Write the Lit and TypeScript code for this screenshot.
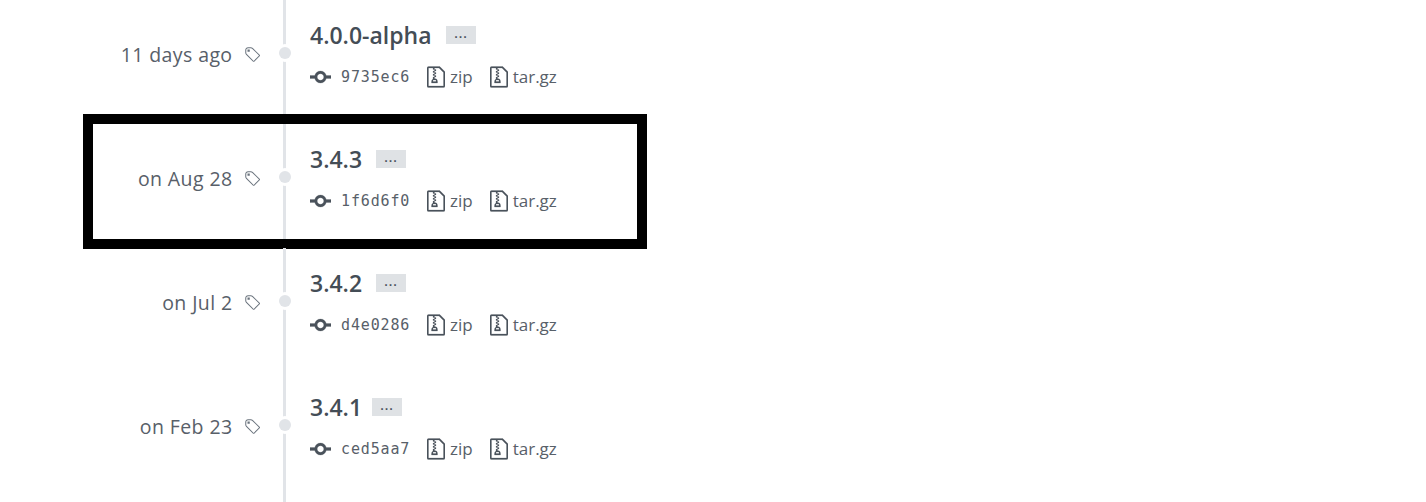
import { LitElement, html, css, svg } from "lit";
import { customElement } from "lit/decorators.js";

const rows = [
  { when: "11 days ago", tag: "4.0.0-alpha", sha: "9735ec6", w: 121 },
  { when: "on Aug 28", tag: "3.4.3", sha: "1f6d6f0", w: 51, boxed: true },
  { when: "on Jul 2", tag: "3.4.2", sha: "d4e0286", w: 51 },
  { when: "on Feb 23", tag: "3.4.1", sha: "ced5aa7", w: 47 },
];

const tagIcon = svg`<path fill-rule="evenodd" d="M7.73 1.73C7.26 1.26 6.62 1 5.96 1H3.5C2.13 1 1 2.13 1 3.5v2.47c0 .66.27 1.3.73 1.77l6.06 6.06c.39.39 1.02.39 1.41 0l4.59-4.59a.996.996 0 0 0 0-1.41L7.73 1.73zM2.38 7.09c-.31-.3-.47-.7-.47-1.13V3.5c0-.88.72-1.59 1.59-1.59h2.47c.42 0 .83.16 1.13.47l6.14 6.13-4.73 4.73-6.13-6.15zM3.01 3h2v2H3V3h.01z"/>`;
const commitIcon = svg`<path fill-rule="evenodd" d="M10.86 7c-.45-1.72-2-3-3.86-3-1.86 0-3.41 1.28-3.86 3H0v2h3.14c.45 1.72 2 3 3.86 3 1.86 0 3.41-1.28 3.86-3H14V7h-3.14zM7 10.2c-1.22 0-2.2-.98-2.2-2.2 0-1.22.98-2.2 2.2-2.2 1.22 0 2.2.98 2.2 2.2 0 1.22-.98 2.2-2.2 2.2z"/>`;
const zipIcon = svg`<path fill-rule="evenodd" d="M8.5 1H1a1 1 0 0 0-1 1v12a1 1 0 0 0 1 1h10a1 1 0 0 0 1-1V4.5L8.5 1zM11 14H1V2h3v1h1V2h3l3 3v9zM5 4V3h1v1H5zM4 4h1v1H4V4zm1 2V5h1v1H5zM4 6h1v1H4V6zm1 2V7h1v1H5zM4 9.28A2 2 0 0 0 3 11v1h4v-1a2 2 0 0 0-2-2V8H4v1.28zM6 10v1H4v-1h2z"/>`;

@customElement("app-root")
export class AppRoot extends LitElement {
  static styles = css`
    :host {
      display: block;
      height: 502px;
      overflow: hidden;
      background: #fff;
      font-family: "Open Sans", "Noto Sans", sans-serif;
      color: #586069;
    }
    .row {
      position: relative;
      display: grid;
      grid-template-columns: 232px 28px 50px 1fr;
      height: 124px;
    }
    .when {
      display: flex;
      justify-content: flex-end;
      align-items: center;
      height: 108px;
      margin-right: -0.5px;
      font-size: 19.5px;
      letter-spacing: 0.4px;
      color: #586069;
      white-space: nowrap;
    }
    .tagcol {
      display: flex;
      justify-content: flex-end;
      align-items: center;
      height: 110px;
    }
    .tagcol svg {
      width: 16px;
      height: 18px;
      fill: #6a737d;
    }
    .rail {
      position: relative;
      grid-column: 3;
      height: 124px;
    }
    .line {
      position: absolute;
      left: 23px;
      top: 0;
      bottom: 0;
      width: 3px;
      background: #e1e4e8;
    }
    .dot {
      position: absolute;
      left: 19px;
      top: 47px;
      width: 12px;
      height: 12px;
      border-radius: 50%;
      background: #e1e4e8;
      box-shadow: 0 0 0 3px #fff;
    }
    .main {
      padding-top: 19px;
    }
    .title {
      display: flex;
      align-items: center;
      gap: 15px;
      height: 32px;
    }
    .title b {
      font-size: 23px;
      font-weight: 600;
      color: #444d56;
      line-height: 32px;
      white-space: nowrap;
    }
    .more {
      display: flex;
      align-items: center;
      justify-content: center;
      width: 30px;
      height: 18px;
      padding-top: 4px;
      box-sizing: border-box;
      background: #dfe2e5;
      color: #444d56;
      font-size: 13px;
      font-weight: 600;
      letter-spacing: 1px;
      line-height: 1;
    }
    .meta {
      display: flex;
      align-items: center;
      height: 24px;
      margin-top: 14px;
      font-size: 17px;
      color: #586069;
    }
    .meta svg {
      fill: #4a525b;
      stroke: #4a525b;
      stroke-width: 0.15;
    }
    .commit {
      width: 21px;
      height: 24px;
      margin-right: 10px;
    }
    .sha {
      width: 69px;
      margin-right: 17px;
      font-family: "DejaVu Sans Mono", "Liberation Mono", monospace;
      font-size: 15px;
      letter-spacing: 0.85px;
      white-space: nowrap;
    }
    .zip {
      width: 18px;
      height: 24px;
      margin-right: 5px;
    }
    .dl {
      position: relative;
      top: -1px;
    }
    .gap {
      width: 17px;
    }
    .box {
      position: absolute;
      left: 83px;
      top: -10px;
      width: 564px;
      height: 135px;
      box-sizing: border-box;
      border: 10px solid #000;
      pointer-events: none;
    }
  `;

  render() {
    return html`${rows.map(
      (r) => html`<div class="row">
        <div class="when">${r.when}</div>
        <div class="tagcol"><svg viewBox="0 0 14 16">${tagIcon}</svg></div>
        <div class="rail"><div class="line"></div><div class="dot"></div></div>
        <div class="main">
          <div class="title"><b style="width:${r.w}px">${r.tag}</b><span class="more">···</span></div>
          <div class="meta">
            <svg class="commit" viewBox="0 0 14 16">${commitIcon}</svg>
            <span class="sha">${r.sha}</span>
            <svg class="zip" viewBox="0 0 12 16">${zipIcon}</svg>
            <span class="dl">zip</span>
            <span class="gap"></span>
            <svg class="zip" viewBox="0 0 12 16">${zipIcon}</svg>
            <span class="dl">tar.gz</span>
          </div>
        </div>
        ${r.boxed ? html`<div class="box"></div>` : ""}
      </div>`
    )}<div class="row"><div class="rail"><div class="line"></div></div></div>`;
  }
}
